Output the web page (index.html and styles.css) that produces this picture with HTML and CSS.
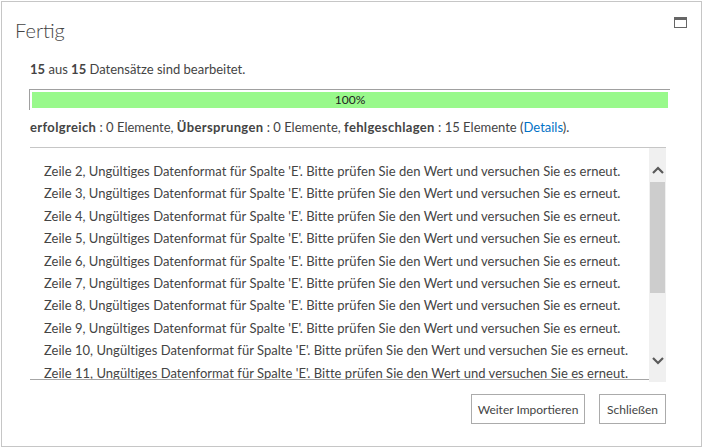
FILE: index.html
```html
<!DOCTYPE html>
<html lang="de">
<head>
<meta charset="utf-8">
<title>Fertig</title>
<link rel="stylesheet" href="styles.css">
</head>
<body>
<div class="dialog">
  <div class="title-row">
    <h1 class="title">Fertig</h1>
    <span class="maximize" aria-label="Maximieren"></span>
  </div>
  <div class="content">
    <p class="summary"><b>15</b> aus <b>15</b> Datensätze sind bearbeitet.</p>
    <div class="progress"><div class="progress-fill">100%</div></div>
    <p class="stats"><b>erfolgreich</b> : 0 Elemente, <b>Übersprungen</b> : 0 Elemente, <b>fehlgeschlagen</b> : 15 Elemente (<a class="link" href="#">Details</a>).</p>
    <div class="listbox">
      <div class="list">
        <div class="item">Zeile 2, Ungültiges Datenformat für Spalte 'E'. Bitte prüfen Sie den Wert und versuchen Sie es erneut.</div>
        <div class="item">Zeile 3, Ungültiges Datenformat für Spalte 'E'. Bitte prüfen Sie den Wert und versuchen Sie es erneut.</div>
        <div class="item">Zeile 4, Ungültiges Datenformat für Spalte 'E'. Bitte prüfen Sie den Wert und versuchen Sie es erneut.</div>
        <div class="item">Zeile 5, Ungültiges Datenformat für Spalte 'E'. Bitte prüfen Sie den Wert und versuchen Sie es erneut.</div>
        <div class="item">Zeile 6, Ungültiges Datenformat für Spalte 'E'. Bitte prüfen Sie den Wert und versuchen Sie es erneut.</div>
        <div class="item">Zeile 7, Ungültiges Datenformat für Spalte 'E'. Bitte prüfen Sie den Wert und versuchen Sie es erneut.</div>
        <div class="item">Zeile 8, Ungültiges Datenformat für Spalte 'E'. Bitte prüfen Sie den Wert und versuchen Sie es erneut.</div>
        <div class="item">Zeile 9, Ungültiges Datenformat für Spalte 'E'. Bitte prüfen Sie den Wert und versuchen Sie es erneut.</div>
        <div class="item">Zeile 10, Ungültiges Datenformat für Spalte 'E'. Bitte prüfen Sie den Wert und versuchen Sie es erneut.</div>
        <div class="item">Zeile 11, Ungültiges Datenformat für Spalte 'E'. Bitte prüfen Sie den Wert und versuchen Sie es erneut.</div>
      </div>
      <div class="scrollbar">
        <div class="arrow-btn up">
          <svg width="12" height="8" viewBox="0 0 12 8"><path d="M1 7 L6 2 L11 7" fill="none" stroke="#5a5a5a" stroke-width="2.2"/></svg>
        </div>
        <div class="thumb"></div>
        <div class="track"></div>
        <div class="arrow-btn down">
          <svg width="12" height="8" viewBox="0 0 12 8"><path d="M1 1 L6 6 L11 1" fill="none" stroke="#5a5a5a" stroke-width="2.2"/></svg>
        </div>
      </div>
    </div>
    <div class="buttons">
      <button class="btn btn-import" type="button">Weiter Importieren</button>
      <button class="btn btn-close" type="button">Schließen</button>
    </div>
  </div>
</div>
</body>
</html>
```

FILE: styles.css
```css
html, body {
  margin: 0;
  padding: 0;
  background: #ffffff;
}

body {
  font-family: Lato, "Open Sans", "Liberation Sans", sans-serif;
  color: #444444;
  font-size: 13px;
}

.dialog {
  box-sizing: border-box;
  width: 701px;
  height: 446px;
  margin: 1px 0 0 1px;
  border: 1px solid #c6c6c6;
  padding-top: 14px;
  overflow: hidden;
}

.title-row {
  display: flex;
  justify-content: space-between;
  align-items: flex-start;
  padding: 0 14px 0 13px;
}

.title {
  margin: 0;
  font-size: 20px;
  font-weight: 300;
  line-height: 28px;
  color: #444444;
}

.maximize {
  box-sizing: border-box;
  width: 13px;
  height: 11px;
  margin-top: 1px;
  border: 1px solid #666666;
  border-top-width: 3px;
}

.content {
  padding: 0 35px 0 28px;
}

.summary {
  margin: 16px 0 0;
  line-height: 18px;
}

.summary b, .stats b {
  font-weight: 700;
}

.stats b {
  letter-spacing: 0.35px;
}

.progress {
  margin: 11px -4px 0 -1px;
  border-top: 1px solid #a0a0a0;
  border-left: 1px solid #a0a0a0;
  padding: 2px;
}

.progress-fill {
  height: 16px;
  background: #99f98b;
  text-align: center;
  font-size: 12px;
  line-height: 16px;
  color: #222222;
}

.stats {
  margin: 8px 0 0;
  line-height: 18px;
}

.link {
  color: #0072c6;
  text-decoration: none;
}

.listbox {
  margin-top: 11px;
  border-top: 1px solid #c6c6c6;
  display: flex;
  align-items: flex-start;
}

.list {
  flex: 1;
  min-width: 0;
  box-sizing: border-box;
  height: 232px;
  border-bottom: 1px solid #a6a6a6;
  padding: 12px 0 0 14px;
  overflow: hidden;
}

.item {
  line-height: 22.4px;
  white-space: nowrap;
  letter-spacing: 0.03px;
}

.scrollbar {
  width: 17px;
  height: 234px;
  background: #f0f0f0;
  display: flex;
  flex-direction: column;
}

.arrow-btn {
  display: flex;
  justify-content: center;
  align-items: center;
  box-sizing: border-box;
}

.arrow-btn.up {
  height: 34px;
  padding-top: 9px;
}

.thumb {
  height: 111px;
  margin: 0 1px;
  background: #cdcdcd;
}

.track {
  flex: 1;
}

.arrow-btn.down {
  height: 40px;
  padding-bottom: 2px;
}

.buttons {
  display: flex;
  justify-content: flex-end;
  gap: 14px;
  margin-top: 12px;
}

.btn {
  height: 30px;
  padding: 0;
  background: #ffffff;
  border: 1px solid #ababab;
  font-family: Lato, "Open Sans", "Liberation Sans", sans-serif;
  font-size: 12px;
  color: #444444;
  text-align: center;
}

.btn-import {
  width: 114px;
}

.btn-close {
  width: 67px;
}
```
